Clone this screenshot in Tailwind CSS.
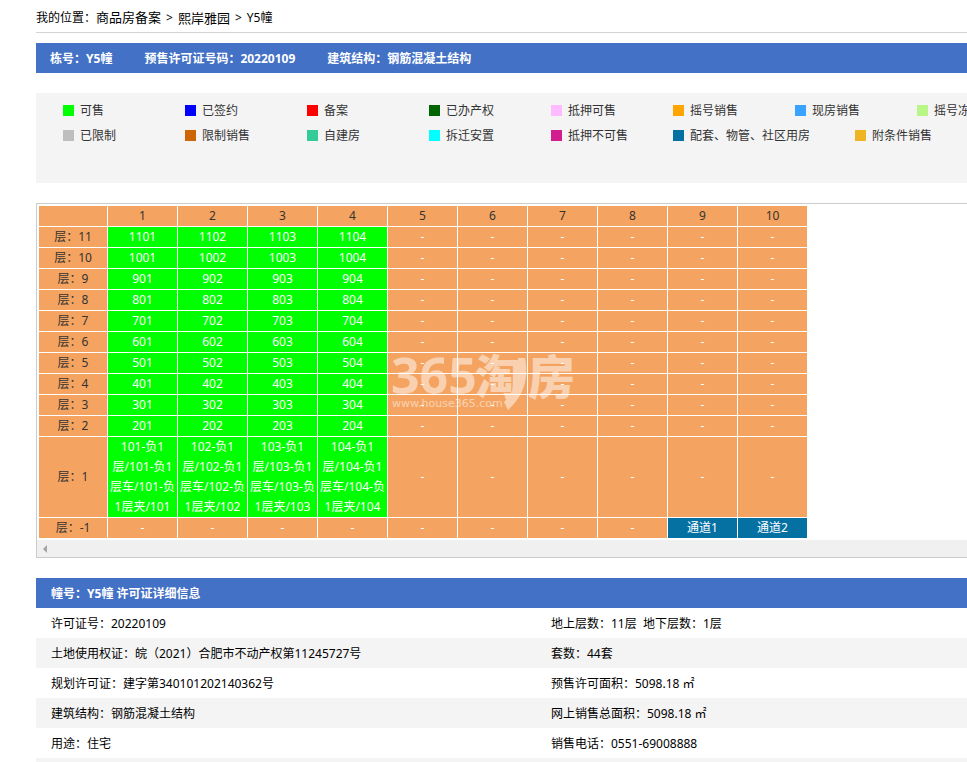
<!DOCTYPE html>
<html lang="zh-CN">
  <head>
    <meta charset="UTF-8" />
    <meta name="viewport" content="width=device-width, initial-scale=1.0" />
    <title>Y5幢 - 熙岸雅园</title>
    <script src="https://cdn.jsdelivr.net/npm/@tailwindcss/browser@4"></script>
    <style>
      body {
        font-family: "Noto Sans", "Noto Sans CJK SC", sans-serif;
      }
    </style>
  </head>
  <body class="bg-white text-black text-[12px] leading-5 pl-9 overflow-x-hidden">
    <nav class="flex items-center gap-[5px] h-[33px] pt-[3px] border-b border-[#d3d3d3] whitespace-nowrap">
      <span>我的位置：<a href="#" class="text-[13px]">商品房备案</a></span>
      <span>&gt;</span>
      <a href="#" class="text-[13px]">熙岸雅园</a>
      <span>&gt;</span>
      <span>Y5幢</span>
    </nav>

    <h1 class="mt-[10px] h-[30px] pt-[2px] pl-[14px] flex items-center gap-8 bg-[#4371c6] text-white font-bold whitespace-nowrap">
      <span>栋号：Y5幢</span>
      <span>预售许可证号码：20220109</span>
      <span>建筑结构：钢筋混凝土结构</span>
    </h1>

    <!-- status legend -->
    <div class="mt-5 h-[90px] pt-[5px] pl-[27px] bg-[#f4f4f4] text-[#333] whitespace-nowrap overflow-hidden">
      <ul class="flex h-[25px]">
        <li class="w-[122px] shrink-0 flex items-center gap-[6px]"><i class="size-[11px] bg-[#00ff00]"></i>可售</li>
        <li class="w-[122px] shrink-0 flex items-center gap-[6px]"><i class="size-[11px] bg-[#0000ff]"></i>已签约</li>
        <li class="w-[122px] shrink-0 flex items-center gap-[6px]"><i class="size-[11px] bg-[#ff0000]"></i>备案</li>
        <li class="w-[122px] shrink-0 flex items-center gap-[6px]"><i class="size-[11px] bg-[#006400]"></i>已办产权</li>
        <li class="w-[122px] shrink-0 flex items-center gap-[6px]"><i class="size-[11px] bg-[#ffbbff]"></i>抵押可售</li>
        <li class="w-[122px] shrink-0 flex items-center gap-[6px]"><i class="size-[11px] bg-[#ffa500]"></i>摇号销售</li>
        <li class="w-[122px] shrink-0 flex items-center gap-[6px]"><i class="size-[11px] bg-[#3aa3ff]"></i>现房销售</li>
        <li class="w-[122px] shrink-0 flex items-center gap-[6px]"><i class="size-[11px] bg-[#b9f587]"></i>摇号冻结</li>
      </ul>
      <ul class="flex h-[25px]">
        <li class="w-[122px] shrink-0 flex items-center gap-[6px]"><i class="size-[11px] bg-[#bebebe]"></i>已限制</li>
        <li class="w-[122px] shrink-0 flex items-center gap-[6px]"><i class="size-[11px] bg-[#cd6600]"></i>限制销售</li>
        <li class="w-[122px] shrink-0 flex items-center gap-[6px]"><i class="size-[11px] bg-[#33cc99]"></i>自建房</li>
        <li class="w-[122px] shrink-0 flex items-center gap-[6px]"><i class="size-[11px] bg-[#00ffff]"></i>拆迁安置</li>
        <li class="w-[122px] shrink-0 flex items-center gap-[6px]"><i class="size-[11px] bg-[#d11d8d]"></i>抵押不可售</li>
        <li class="w-[182px] shrink-0 flex items-center gap-[6px]"><i class="size-[11px] bg-[#0571a3]"></i>配套、物管、社区用房</li>
        <li class="w-[122px] shrink-0 flex items-center gap-[6px]"><i class="size-[11px] bg-[#eeb422]"></i>附条件销售</li>
      </ul>
    </div>

    <!-- room table -->
    <div class="relative mt-5 border border-r-0 border-[#ccc]">
      <div class="p-px overflow-hidden">
        <table class="table-fixed w-[770px] border-separate border-spacing-px text-center text-white">
          <thead>
            <tr id="columns" class="text-[#333]"></tr>
          </thead>
          <tbody id="floors"></tbody>
        </table>
      </div>
      <div class="h-[17px] bg-[#f0f0f0] flex items-center pl-[6px]">
        <svg class="w-1 h-2" viewBox="0 0 4 8" fill="#a3a3a3"><path d="M4 0v8L0 4z" /></svg>
      </div>

      <!-- watermark -->
      <svg class="absolute left-[352px] top-[146px] w-[192px] h-[64px] opacity-50 pointer-events-none" viewBox="0 0 192 64" fill="#fff">
        <text x="2" y="44" font-size="50" font-weight="700" font-family="Open Sans">365</text>
        <text x="86" y="44" font-size="47" font-weight="900" font-family="Noto Sans CJK SC">淘</text>
        <text x="139" y="44" font-size="47" font-weight="900" font-family="Noto Sans CJK SC">房</text>
        <path d="M129 8h7c4 22-2 38-17 52l-4-8c12-12 17-25 14-44z" />
        <text x="3" y="57" font-size="11" font-family="DejaVu Sans">www.house365.com</text>
      </svg>
    </div>

    <h2 class="mt-5 h-[30px] pt-[2px] pl-[15px] flex items-center bg-[#4371c6] text-white font-bold">
      幢号：Y5幢 许可证详细信息
    </h2>
    <dl>
      <div class="flex items-center h-[30px] pt-[2px] pl-[15px]">
        <dt class="w-[500px]">许可证号：20220109</dt>
        <dd>地上层数：11层&nbsp; 地下层数：1层</dd>
      </div>
      <div class="flex items-center h-[30px] pt-[2px] pl-[15px] bg-[#f4f4f4]">
        <dt class="w-[500px]">土地使用权证：皖（2021）合肥市不动产权第11245727号</dt>
        <dd>套数：44套</dd>
      </div>
      <div class="flex items-center h-[30px] pt-[2px] pl-[15px]">
        <dt class="w-[500px]">规划许可证：建字第340101202140362号</dt>
        <dd>预售许可面积：5098.18 ㎡</dd>
      </div>
      <div class="flex items-center h-[30px] pt-[2px] pl-[15px] bg-[#f4f4f4]">
        <dt class="w-[500px]">建筑结构：钢筋混凝土结构</dt>
        <dd>网上销售总面积：5098.18 ㎡</dd>
      </div>
      <div class="flex items-center h-[30px] pt-[2px] pl-[15px]">
        <dt class="w-[500px]">用途：住宅</dt>
        <dd>销售电话：0551-69008888</dd>
      </div>
    </dl>
    <div class="h-1 bg-[#f4f4f4]"></div>

    <script>
      const columnCount = 10;
      const columns = document.getElementById("columns");
      const floors = document.getElementById("floors");

      let head = '<td class="w-[68px] p-0 bg-[#f4a460]"></td>';
      for (let i = 1; i <= columnCount; i++) {
        head += `<th class="p-0 font-normal bg-[#f4a460]">${i}</th>`;
      }
      columns.innerHTML = head;

      function emptyCell() {
        return '<td class="p-0 bg-[#f4a460]">-</td>';
      }

      function saleCell(text) {
        return `<td class="p-0 bg-[#00ff00] whitespace-nowrap"><a href="#">${text}</a></td>`;
      }

      function serviceCell(text) {
        return `<td class="p-0 bg-[#0571a3]"><a href="#">${text}</a></td>`;
      }

      function addFloor(floor) {
        let row = `<th class="p-0 font-normal bg-[#f4a460] text-[#333]">层：${floor}</th>`;
        for (let i = 1; i <= columnCount; i++) {
          if (floor > 1 && i <= 4) {
            row += saleCell(`${floor}0${i}`);
          } else if (floor === 1 && i <= 4) {
            // ground floor units come with basement, garage and mezzanine
            row += saleCell(
              `10${i}-负1<br>层/10${i}-负1<br>层车/10${i}-负<br>1层夹/10${i}`
            );
          } else if (floor === -1 && i >= 9) {
            row += serviceCell(`通道${i - 8}`);
          } else {
            row += emptyCell();
          }
        }
        const tr = document.createElement("tr");
        tr.innerHTML = row;
        floors.appendChild(tr);
      }

      for (let floor = 11; floor >= 1; floor--) {
        addFloor(floor);
      }
      addFloor(-1);
    </script>
  </body>
</html>
